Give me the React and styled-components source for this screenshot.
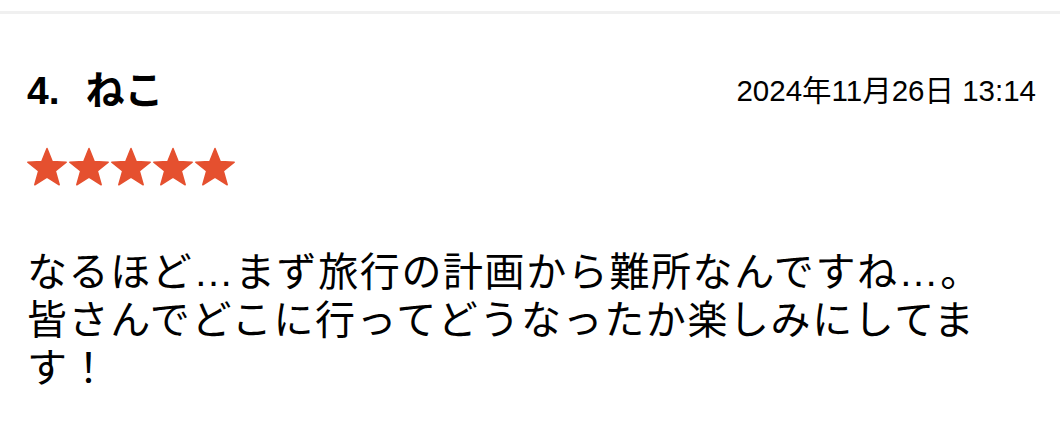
import React from 'react';
import styled, { createGlobalStyle } from 'styled-components';

const GlobalStyle = createGlobalStyle`
    body {
        margin: 0;
        background: #ffffff;
        font-family: "Liberation Sans", "Noto Sans CJK JP", sans-serif;
        color: #000;
    }
`;

const review = {
    number: 4,
    name: 'ねこ',
    date: '2024年11月26日 13:14',
    rating: 5,
    body: 'なるほど…まず旅行の計画から難所なんですね…。皆さんでどこに行ってどうなったか楽しみにしてます！',
};

const Star = () => (
    <svg width="42" height="40" viewBox="0 0 42 40">
        <polygon
            points="21,1.5 26.2,14.6 40.2,15.2 29.3,24 33.2,37.8 21,30 8.8,37.8 12.7,24 1.8,15.2 15.8,14.6"
            fill="#e5502f"
            stroke="#e5502f"
            strokeWidth="1.5"
            strokeLinejoin="round"
        />
    </svg>
);

const App = () => {
    return (
        <Page>
            <GlobalStyle />
            <Header>
                <Title>
                    <Number>{review.number}.</Number>
                    {review.name}
                </Title>
                <DateText>{review.date}</DateText>
            </Header>
            <Stars>
                {Array.from({ length: review.rating }).map((_, i) => (
                    <Star key={i} />
                ))}
            </Stars>
            <Body>{review.body}</Body>
        </Page>
    );
};

export default App;

const Page = styled.div`
    margin-top: 11px;
    border-top: 3px solid #f0f0f0;
    padding: 0 27px;
    height: 410px;
`;

const Header = styled.div`
    display: flex;
    justify-content: space-between;
    align-items: center;
    padding-top: 53px;
`;

const Title = styled.h2`
    margin: 0;
    font-size: 39px;
    line-height: 47px;
    font-weight: bold;
`;

const Number = styled.span`
    margin-right: 26px;
`;

const DateText = styled.div`
    font-size: 29.5px;
    line-height: 34px;
    margin-right: -3px;
`;

const Stars = styled.div`
    display: flex;
    margin-top: 33px;
    margin-left: -1px;
`;

const Body = styled.p`
    margin: 61px 0 0;
    font-size: 40px;
    line-height: 48px;
    letter-spacing: 1.6px;
    max-width: 985px;
`;
